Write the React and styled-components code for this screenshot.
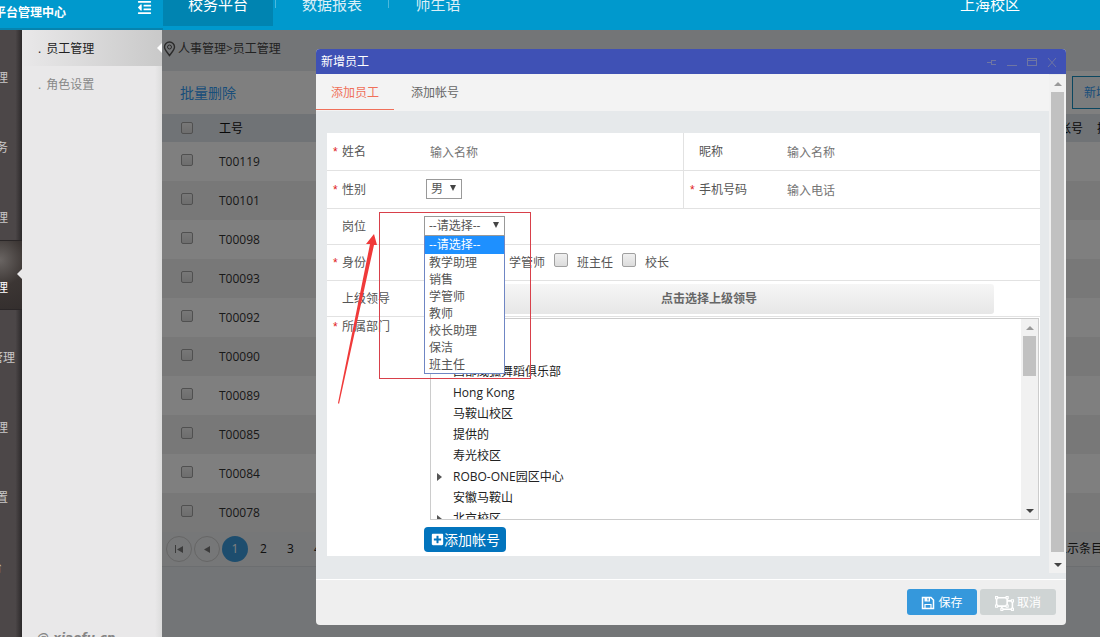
import styled, { createGlobalStyle } from "styled-components";
import { FaOutdent, FaPlusSquare, FaRegObjectUngroup } from "react-icons/fa";

const GlobalStyle = createGlobalStyle`
  * {
    box-sizing: border-box;
  }
  body {
    margin: 0;
    overflow: hidden;
    font-family: "Open Sans", "Noto Sans CJK SC", sans-serif;
    font-size: 12px;
    line-height: 18px;
    color: #555;
  }
  button, input, select {
    font-family: inherit;
    font-size: 12px;
    line-height: 18px;
    color: inherit;
  }
  a {
    color: inherit;
    text-decoration: none;
  }
`;

const Page = styled.div`
  display: flex;
  flex-direction: column;
  height: 100vh;
`;

const TopBar = styled.header`
  display: flex;
  height: 30px;
  flex-shrink: 0;
  background: #0099cd;
  color: #fff;
  overflow: hidden;
`;

const Brand = styled.div`
  display: flex;
  align-items: flex-start;
  justify-content: space-between;
  width: 163px;
  padding-right: 11px;
  border-bottom: 2px solid #0683ae;
`;

const BrandName = styled.strong`
  display: flex;
  justify-content: flex-end;
  width: 66px;
  padding-top: 4px;
  white-space: nowrap;
`;

const CollapseButton = styled.button`
  display: flex;
  padding: 0;
  border: none;
  background: none;
  color: #fff;
  font-size: 15px;
  line-height: 12px;
`;

const TopNav = styled.nav`
  display: flex;
  flex: 1;
  height: 26px;
`;

const TopLink = styled.a`
  display: flex;
  justify-content: center;
  width: ${({ $width }) => $width || 112}px;
  height: 26px;
  line-height: 8px;
  font-size: 15px;
  background: ${({ $active }) => ($active ? "#0084b1" : "transparent")};
  opacity: ${({ $active }) => ($active ? 1 : 0.85)};
`;

const Divider = styled.span`
  width: 1px;
  height: 8px;
  margin-left: ${({ $gap }) => $gap || 0}px;
  background: #4cb8dc;
`;

const Campus = styled.a`
  padding: 0 80px 0 0;
  font-size: 15px;
  line-height: 8px;
`;

const Body = styled.div`
  display: flex;
  flex: 1;
  min-height: 0;
`;

const Rail = styled.nav`
  width: 22px;
  flex-shrink: 0;
  overflow: hidden;
  background: linear-gradient(90deg, #4c4748 70%, #2c292a);
  color: #c9c7c7;
`;

const RailItem = styled.a`
  position: relative;
  display: flex;
  align-items: flex-end;
  justify-content: flex-end;
  height: 70px;
  padding: 0 ${({ $end }) => $end}px 13px 0;
  white-space: nowrap;
  color: ${({ $active }) => ($active ? "#fff" : "inherit")};
  box-shadow: ${({ $active }) =>
    $active ? "inset 0 1px #2a2627, inset 0 -1px #2a2627" : "none"};
  background: ${({ $active }) =>
    $active
      ? "radial-gradient(circle at 0 20px, #6a6563, #3c3634 26px, #332e2d)"
      : "transparent"};
`;

const Pointer = styled.i`
  position: absolute;
  right: 0;
  top: ${({ $top }) => $top}px;
  border: solid transparent;
  border-width: 5px 5px 5px 0;
  border-right-color: ${({ $color }) => $color};
`;

const Sidebar = styled.aside`
  display: flex;
  flex-direction: column;
  width: 140px;
  flex-shrink: 0;
  overflow: hidden;
  background: linear-gradient(90deg, #e9e8e9 95%, #dcdcdc);
`;

const SideLink = styled.a`
  position: relative;
  display: flex;
  align-items: center;
  gap: 5px;
  height: 36px;
  padding: 2px 0 0 16px;
  color: ${({ $active }) => ($active ? "#222" : "#888")};
  background: ${({ $active }) =>
    $active ? "linear-gradient(90deg, #e9e8e9, #c9c9c9)" : "transparent"};
`;

const Copyright = styled.div`
  height: 8px;
  margin-top: auto;
  padding-left: 15px;
  font: italic bold 12px/18px "DejaVu Sans", sans-serif;
  color: #858585;
`;

const Main = styled.main`
  position: relative;
  flex: 1;
  min-width: 0;
  overflow: hidden;
  background: #e6eaee;
`;

// the list is wider than the window, its right edge is cut off
const ListPane = styled.div`
  margin-right: -44px;
`;

const Breadcrumb = styled.div`
  display: flex;
  align-items: center;
  gap: 2px;
  height: 41px;
  padding: 0 0 4px 1px;
  color: #444;
`;

const Toolbar = styled.div`
  display: flex;
  align-items: center;
  justify-content: flex-end;
  gap: 6px;
  height: 43px;
  padding-left: 18px;
  background: #fff;
`;

const BulkDelete = styled.button`
  margin-right: auto;
  padding: 0;
  border: none;
  background: none;
  color: #329cf4;
  font-size: 14px;
`;

const OutlineButton = styled.button`
  width: 72px;
  height: 33px;
  border: 1px solid #168fc0;
  background: #f4f8fb;
  color: #329cf4;
`;

const StaffTable = styled.table`
  width: 100%;
  border-collapse: collapse;
  table-layout: fixed;
  color: #333;
  th, td {
    padding: 0;
    text-align: left;
    font-weight: 400;
    white-space: nowrap;
  }
  th {
    height: 28px;
    padding-top: 2px;
    background: #e0e7ed;
    color: #111;
  }
  td {
    height: 39px;
  }
  tbody tr {
    background: #fff;
  }
  tbody tr:nth-child(even) {
    background: #f0f0f0;
  }
`;

const CheckCell = styled.td`
  && {
    padding: 0 0 ${({ as }) => (as ? 1 : 4)}px 19px;
  }
`;

const Checkbox = styled.input`
  appearance: none;
  display: block;
  flex-shrink: 0;
  width: ${({ $size }) => $size || 12}px;
  height: ${({ $size }) => $size || 12}px;
  margin: 0;
  border: 1px solid #a0a0a0;
  border-radius: 2px;
  background: linear-gradient(#f0f0f0, #dcdcdc);
`;

const Pager = styled.div`
  display: flex;
  align-items: center;
  height: 35px;
  padding: 0 41px 0 4px;
  border-bottom: 1px solid #d8dce0;
  background: #eceef0;
  color: #222;
`;

const PageButton = styled.button`
  display: flex;
  align-items: center;
  justify-content: center;
  width: ${({ $round }) => ($round ? 26 : 27)}px;
  height: 26px;
  margin-right: ${({ $round }) => ($round ? 2 : 0)}px;
  padding: 0;
  border: ${({ $round, $active }) =>
    $round && !$active ? "1px solid #ccc" : "none"};
  border-radius: 50%;
  background: ${({ $active }) => ($active ? "#3a9bdc" : "transparent")};
  color: ${({ $active }) => ($active ? "#fff" : "#222")};
`;

const PageSize = styled.span`
  margin-left: auto;
`;

const Overlay = styled.div`
  position: absolute;
  inset: 0;
  display: flex;
  padding: 19px 34px 12px 154px;
  background: rgba(0, 0, 0, 0.5);
`;

const Dialog = styled.section`
  position: relative;
  display: flex;
  flex-direction: column;
  flex: 1;
  min-width: 0;
  border-radius: 4px;
  overflow: hidden;
  background: #efefef;
`;

const TitleBar = styled.header`
  display: flex;
  align-items: center;
  gap: 4px;
  height: 25px;
  flex-shrink: 0;
  padding: 0 6px 0 5px;
  background: #3f51b5;
  color: #fff;
`;

const DialogTitle = styled.h1`
  flex: 1;
  margin: 0;
  font-size: 12px;
  font-weight: 400;
`;

const WindowButton = styled.button`
  display: flex;
  width: 16px;
  height: 16px;
  padding: 2px;
  border: none;
  background: none;
  color: #6f76a3;
`;

const DialogBody = styled.div`
  display: flex;
  flex: 1;
  min-height: 0;
  background: #e6e9eb;
`;

const Scrolled = styled.div`
  flex: 1;
  min-width: 0;
`;

const Tabs = styled.div`
  display: flex;
  height: 37px;
  background: #f3f3f3;
`;

const Tab = styled.button`
  height: 36px;
  margin-right: 2px;
  padding: 2px 15px 0;
  border: none;
  border-bottom: 1px solid
    ${({ $active }) => ($active ? "#f0705a" : "transparent")};
  background: none;
  color: ${({ $active }) => ($active ? "#f0705a" : "#666")};
`;

const ScrollBar = styled.div`
  display: flex;
  flex-direction: column;
  align-items: center;
  width: 17px;
  flex-shrink: 0;
  margin: ${({ $outer }) => ($outer ? "1px 0 6px" : "0")};
  background: #f1f1f1;
`;

const ScrollArrow = styled.i`
  display: flex;
  align-items: center;
  justify-content: center;
  height: 17px;
  flex-shrink: 0;
  margin-top: ${({ $down }) => ($down ? "auto" : "0")};
  &::after {
    content: "";
    border: solid transparent;
    border-width: ${({ $down }) => ($down ? "4px 4px 0" : "0 4px 4px")};
    border-top-color: ${({ $down }) => ($down ? "#444" : "transparent")};
    border-bottom-color: ${({ $down }) => ($down ? "transparent" : "#999")};
  }
`;

const ScrollThumb = styled.div`
  width: 13px;
  flex: ${({ $size }) => ($size ? `0 0 ${$size}px` : "1")};
  margin-bottom: 4px;
  background: #c1c1c1;
`;

const Form = styled.form`
  margin: 22px 9px 0 11px;
  background: #fff;
`;

const Row = styled.div`
  display: flex;
  height: ${({ $tall }) => ($tall ? 38 : 36)}px;
  border-bottom: 1px solid #e2e2e2;
`;

const Cell = styled.div`
  display: flex;
  flex: 1;
  align-items: center;
  min-width: 0;
  & + & {
    border-left: 1px solid #e2e2e2;
  }
`;

const Label = styled.label`
  display: flex;
  width: 97px;
  flex-shrink: 0;
  padding-left: 6px;
`;

const Star = styled.span`
  width: 9px;
  font-family: "Liberation Sans", sans-serif;
  color: #e02020;
`;

const TextInput = styled.input`
  flex: 1;
  min-width: 0;
  padding: 2px 6px 0;
  border: none;
  outline: none;
  background: none;
  &::placeholder {
    color: #757575;
    opacity: 1;
  }
`;

const SelectBox = styled.div`
  position: relative;
  display: flex;
  width: ${({ $width }) => $width}px;
  margin: 0 0 2px ${({ $inset }) => $inset || 0}px;
  &::after {
    content: "";
    position: absolute;
    right: 6px;
    top: 6px;
    border: solid transparent;
    border-width: 6px 3px 0;
    border-top-color: #444;
    pointer-events: none;
  }
`;

const Select = styled.select`
  appearance: none;
  width: 100%;
  height: 20px;
  padding: 0 4px;
  border: 1px solid #999;
  border-radius: 0;
  background: #fff;
`;

const OptionList = styled.ul`
  position: absolute;
  z-index: 2;
  top: 20px;
  left: 0;
  width: 100%;
  margin: 0;
  padding: 0;
  border: 1px solid #6f86c4;
  border-top: none;
  background: #fff;
  list-style: none;
`;

const OptionItem = styled.li`
  height: ${({ $active }) => ($active ? 18 : 17)}px;
  padding: 0 4px;
  line-height: ${({ $active }) => ($active ? 18 : 17)}px;
  background: ${({ $active }) => ($active ? "#1e90ff" : "#fff")};
  color: ${({ $active }) => ($active ? "#fff" : "#555")};
`;

const Roles = styled.div`
  display: flex;
  gap: 9px;
  padding-left: 62px;
`;

const RoleLabel = styled.label`
  display: flex;
  align-items: flex-start;
  gap: 9px;
  span {
    padding-top: 1px;
  }
`;

const LeaderButton = styled.button`
  flex: 1;
  height: 30px;
  margin-right: 46px;
  border: none;
  border-radius: 3px;
  background: linear-gradient(#f6f6f6, #e7e7e7);
  color: #666;
  font-weight: 700;
`;

const DepartmentRow = styled.div`
  display: flex;
  padding: 1px 1px 4px 0;
`;

const DepartmentField = styled.div`
  flex: 1;
  min-width: 0;
`;

const Tree = styled.div`
  display: flex;
  height: 202px;
  margin-left: 6px;
  border: 1px solid #ccc;
`;

const TreeList = styled.ul`
  flex: 1;
  margin: 0;
  padding: 42px 0 0 6px;
  overflow: hidden;
  list-style: none;
  color: #222;
`;

const TreeItem = styled.li`
  display: flex;
  align-items: center;
  height: 21px;
  &::before {
    content: "";
    margin-right: 11px;
    border: solid transparent;
    border-width: 4px 0 4px 5px;
    border-left-color: ${({ $open }) => ($open ? "#555" : "transparent")};
  }
`;

const AddAccount = styled.button`
  display: flex;
  align-items: center;
  height: 25px;
  margin-top: 7px;
  padding: 0 6px 0 7px;
  border: none;
  border-radius: 4px;
  background: #0274bd;
  color: #fff;
  font-size: 14px;
`;

const DialogFooter = styled.footer`
  display: flex;
  justify-content: flex-end;
  gap: 3px;
  height: 46px;
  padding: 9px 10px 0;
  border-top: 1px solid #fff;
`;

const FooterButton = styled.button`
  display: flex;
  align-items: center;
  justify-content: center;
  gap: 3px;
  width: ${({ $width }) => $width}px;
  height: 26px;
  padding: 2px 0 0;
  border: none;
  border-radius: 3px;
  background: ${({ $primary }) => ($primary ? "#3598dc" : "#cfd4d4")};
  color: #fff;
`;

const Highlight = styled.div`
  position: absolute;
  z-index: 3;
  left: 63px;
  top: 163px;
  width: 152px;
  height: 167px;
  border: 1px solid #d8404a;
  pointer-events: none;
`;

const Arrow = styled.svg`
  position: absolute;
  z-index: 3;
  left: 20px;
  top: 184px;
  pointer-events: none;
`;

const railItems = [
  { text: "理", end: 14 },
  { text: "务", end: 14 },
  { text: "理", end: 14 },
  { text: "理", end: 14, active: true },
  { text: "管理", end: 7 },
  { text: "理", end: 14 },
  { text: "置", end: 14 },
  { text: "台", end: 20 }
];

const staff = [
  "T00119",
  "T00101",
  "T00098",
  "T00093",
  "T00092",
  "T00090",
  "T00089",
  "T00085",
  "T00084",
  "T00078"
];

const posts = [
  "--请选择--",
  "教学助理",
  "销售",
  "学管师",
  "教师",
  "校长助理",
  "保洁",
  "班主任"
];

const departments = [
  { name: "西部威狐舞蹈俱乐部" },
  { name: "Hong Kong" },
  { name: "马鞍山校区" },
  { name: "提供的" },
  { name: "寿光校区" },
  { name: "ROBO-ONE园区中心", open: true },
  { name: "安徽马鞍山" },
  { name: "北京校区", open: true }
];

const windowIcons = [
  { label: "pin", d: "M1 6.500h4M5.500 4v5M5 4.500h5M5 8.500h5" },
  { label: "minimize", d: "M1 9.500h10" },
  { label: "maximize", d: "M1 2.500h10M1 4.500h10M1 9.500h10M1.500 2v7M10.500 2v7" },
  { label: "close", d: "M2 2l8 9M10 2l-8 9" }
];

const FieldLabel = ({ htmlFor, required, children }) => (
  <Label htmlFor={htmlFor}>
    <Star>{required ? "*" : ""}</Star>
    {children}
  </Label>
);

const PinIcon = () => (
  <svg width="13" height="16" viewBox="0 0 13 16" fill="none" stroke="#555">
    <path
      d="M6.500 14.500C4.500 11.500 1.500 9 1.500 6a5 5 0 0 1 10 0c0 3-3 5.500-5 8.500z"
      strokeWidth="1.400"
    />
    <circle cx="6.500" cy="6" r="2" />
  </svg>
);

const SaveIcon = () => (
  <svg width="14" height="14" viewBox="0 0 14 14" fill="none" stroke="#fff">
    <path d="M1.500 1.500h8.500l2.500 2.500v8.500h-11z" strokeWidth="1.500" />
    <path d="M4 12.500v-4h6v4" strokeWidth="1.200" />
    <path d="M3.500 1.500h5.500v4h-5.500z" fill="#fff" stroke="none" />
    <path d="M7 2.200v2.300" stroke="#3598dc" strokeWidth="1.200" />
  </svg>
);

const StaffList = () => (
  <ListPane>
    <Breadcrumb>
      <PinIcon />
      <span>人事管理&gt;员工管理</span>
    </Breadcrumb>
    <Toolbar>
      <BulkDelete>批量删除</BulkDelete>
      <OutlineButton aria-label="search" />
      <OutlineButton>新增员工</OutlineButton>
    </Toolbar>
    <StaffTable>
      <colgroup>
        <col style={{ width: 57 }} />
        <col />
        <col style={{ width: 38 }} />
        <col style={{ width: 47 }} />
      </colgroup>
      <thead>
        <tr>
          <CheckCell as="th">
            <Checkbox type="checkbox" aria-label="all" />
          </CheckCell>
          <th>工号</th>
          <th>帐号</th>
          <th>操作</th>
        </tr>
      </thead>
      <tbody>
        {staff.map((id) => (
          <tr key={id}>
            <CheckCell>
              <Checkbox type="checkbox" aria-label={id} />
            </CheckCell>
            <td>{id}</td>
            <td />
            <td />
          </tr>
        ))}
      </tbody>
    </StaffTable>
    <Pager>
      <PageButton $round aria-label="first">
        <svg width="8" height="8" viewBox="0 0 8 8" fill="#777">
          <path d="M0 0h1v8H0zM8 1v7L2 4.500z" />
        </svg>
      </PageButton>
      <PageButton $round aria-label="previous">
        <svg width="8" height="8" viewBox="0 0 8 8" fill="#777">
          <path d="M7 1v7L1 4.500z" />
        </svg>
      </PageButton>
      <PageButton $round $active>
        1
      </PageButton>
      <PageButton>2</PageButton>
      <PageButton>3</PageButton>
      <PageButton>4</PageButton>
      <PageSize>显示条目</PageSize>
    </Pager>
  </ListPane>
);

const StaffForm = () => (
  <Form>
    <Row $tall>
      <Cell>
        <FieldLabel htmlFor="name" required>
          姓名
        </FieldLabel>
        <TextInput id="name" placeholder="输入名称" />
      </Cell>
      <Cell>
        <FieldLabel htmlFor="nickname">昵称</FieldLabel>
        <TextInput id="nickname" placeholder="输入名称" />
      </Cell>
    </Row>
    <Row $tall>
      <Cell>
        <FieldLabel htmlFor="gender" required>
          性别
        </FieldLabel>
        <SelectBox $width={36} $inset={2}>
          <Select id="gender">
            <option>男</option>
            <option>女</option>
          </Select>
        </SelectBox>
      </Cell>
      <Cell>
        <FieldLabel htmlFor="phone" required>
          手机号码
        </FieldLabel>
        <TextInput id="phone" placeholder="输入电话" />
      </Cell>
    </Row>
    <Row>
      <Cell>
        <FieldLabel htmlFor="post">岗位</FieldLabel>
        <SelectBox $width={81}>
          <Select id="post">
            {posts.map((post) => (
              <option key={post}>{post}</option>
            ))}
          </Select>
          <OptionList>
            {posts.map((post, i) => (
              <OptionItem key={post} $active={i === 0}>
                {post}
              </OptionItem>
            ))}
          </OptionList>
        </SelectBox>
      </Cell>
    </Row>
    <Row>
      <Cell>
        <FieldLabel required>身份</FieldLabel>
        <Roles>
          {["学管师", "班主任", "校长"].map((role) => (
            <RoleLabel key={role}>
              <Checkbox type="checkbox" $size={14} />
              <span>{role}</span>
            </RoleLabel>
          ))}
        </Roles>
      </Cell>
    </Row>
    <Row>
      <Cell>
        <FieldLabel htmlFor="leader">上级领导</FieldLabel>
        <LeaderButton id="leader" type="button">
          点击选择上级领导
        </LeaderButton>
      </Cell>
    </Row>
    <DepartmentRow>
      <FieldLabel required>所属部门</FieldLabel>
      <DepartmentField>
        <Tree>
          <TreeList>
            {departments.map(({ name, open }) => (
              <TreeItem key={name} $open={open}>
                {name}
              </TreeItem>
            ))}
          </TreeList>
          <ScrollBar>
            <ScrollArrow />
            <ScrollThumb $size={40} />
            <ScrollArrow $down />
          </ScrollBar>
        </Tree>
        <AddAccount type="button">
          <FaPlusSquare size={13} />
          添加帐号
        </AddAccount>
      </DepartmentField>
    </DepartmentRow>
  </Form>
);

const StaffDialog = () => (
  <Dialog role="dialog">
    <TitleBar>
      <DialogTitle>新增员工</DialogTitle>
      {windowIcons.map(({ label, d }) => (
        <WindowButton key={label} aria-label={label}>
          <svg width="12" height="12" viewBox="0 0 12 12">
            <path d={d} fill="none" stroke="currentColor" />
          </svg>
        </WindowButton>
      ))}
    </TitleBar>
    <DialogBody>
      <Scrolled>
        <Tabs>
          <Tab $active>添加员工</Tab>
          <Tab>添加帐号</Tab>
        </Tabs>
        <StaffForm />
      </Scrolled>
      <ScrollBar $outer>
        <ScrollArrow />
        <ScrollThumb />
        <ScrollArrow $down />
      </ScrollBar>
    </DialogBody>
    <DialogFooter>
      <FooterButton $primary $width={70}>
        <SaveIcon />
        保存
      </FooterButton>
      <FooterButton $width={76}>
        <FaRegObjectUngroup size={19} />
        取消
      </FooterButton>
    </DialogFooter>
    <Highlight />
    <Arrow width="45" height="172" viewBox="0 0 45 172">
      <path d="M2 170L34 11L30 11L38 1L41 12L38 12L3 171z" fill="#f03a3a" />
    </Arrow>
  </Dialog>
);

const App = () => (
  <Page>
    <GlobalStyle />
    <TopBar>
      <Brand>
        <BrandName>平台管理中心</BrandName>
        <CollapseButton aria-label="collapse">
          <FaOutdent />
        </CollapseButton>
      </Brand>
      <TopNav>
        <TopLink href="#" $active $width={110}>
          校务平台
        </TopLink>
        <Divider $gap={2} />
        <TopLink href="#">数据报表</TopLink>
        <Divider />
        <TopLink href="#" $width={98}>
          师生语
        </TopLink>
      </TopNav>
      <Campus href="#">上海校区</Campus>
    </TopBar>
    <Body>
      <Rail>
        {railItems.map(({ text, end, active }, i) => (
          <RailItem key={i} href="#" $end={end} $active={active}>
            {text}
            {active && <Pointer $top={29} $color="#e9e8e9" />}
          </RailItem>
        ))}
      </Rail>
      <Sidebar>
        <SideLink href="#" $active>
          <span>.</span>员工管理
          <Pointer $top={13} $color="#fff" />
        </SideLink>
        <SideLink href="#">
          <span>.</span>角色设置
        </SideLink>
        <Copyright>@ xiaofu.cn</Copyright>
      </Sidebar>
      <Main>
        <StaffList />
        <Overlay>
          <StaffDialog />
        </Overlay>
      </Main>
    </Body>
  </Page>
);

export default App;
